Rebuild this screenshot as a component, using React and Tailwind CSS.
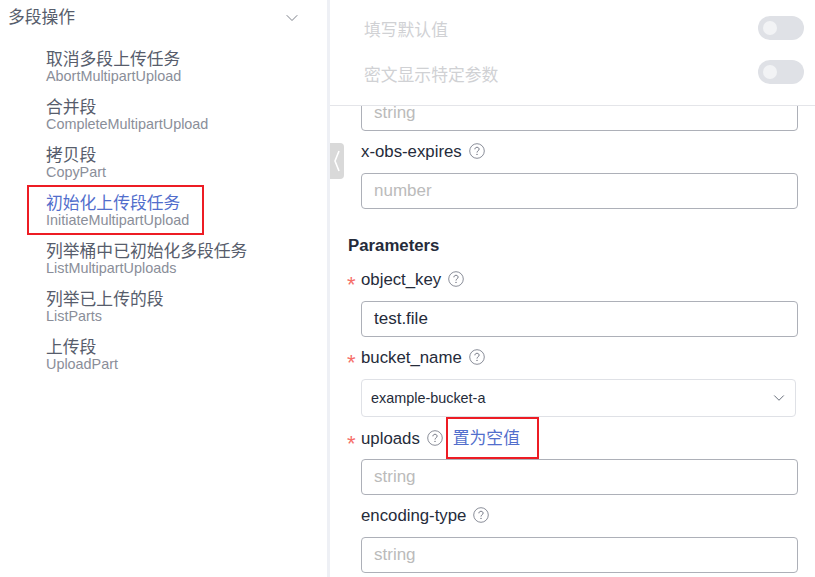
import React from 'react'
import { ChevronDown } from 'lucide-react'

const font = "font-['Liberation_Sans','Noto_Sans_CJK_SC',sans-serif]"

const menuItems = [
  { title: '取消多段上传任务', sub: 'AbortMultipartUpload' },
  { title: '合并段', sub: 'CompleteMultipartUpload' },
  { title: '拷贝段', sub: 'CopyPart' },
  { title: '初始化上传段任务', sub: 'InitiateMultipartUpload', active: true },
  { title: '列举桶中已初始化多段任务', sub: 'ListMultipartUploads' },
  { title: '列举已上传的段', sub: 'ListParts' },
  { title: '上传段', sub: 'UploadPart' }
]

const HelpIcon = () => (
  <svg width="16" height="16" viewBox="0 0 16 16" fill="none" className="-mt-[1px] shrink-0">
    <circle cx="8" cy="8" r="7.3" stroke="#8a8e99" strokeWidth="1" />
    <path d="M5.9 6.3c0-1.2.9-2 2.1-2s2.1.8 2.1 1.9c0 1.5-2.1 1.7-2.1 3.3" stroke="#6f7380" strokeWidth="1" />
    <circle cx="8" cy="11.4" r="0.7" fill="#6f7380" />
  </svg>
)

const Toggle = () => (
  <div className="flex h-6 w-[46px] items-center rounded-full bg-[#dfe1e6] pl-[5px]">
    <div className="h-[14px] w-[14px] rounded-full bg-[#f2f3f5]" />
  </div>
)

const Label = ({ name, required, children, className = '' }) => (
  <div className={`relative flex h-6 items-center gap-[7px] text-[16.8px] text-[#252b3a] ${className}`}>
    {required && <span className="absolute -left-[14px] top-[6px] text-[22px] leading-6 text-[#f66f6a]">*</span>}
    <span className="pt-[2px]">{name}</span>
    <HelpIcon />
    {children}
  </div>
)

const TextInput = ({ placeholder, value, className = '' }) => (
  <div className={`flex h-9 w-[437px] items-center rounded border border-[#adb0b8] px-3 text-[17px] ${value ? 'text-[#252b3a]' : 'text-[#bbbbbb]'} ${className}`}>
    {value || placeholder}
  </div>
)

export default function App() {
  return (
    <div className={`flex h-[577px] w-[815px] overflow-hidden bg-white ${font}`}>
      {/* Left menu */}
      <aside className="relative h-full w-[330px] shrink-0 border-r-[3px] border-[#eef0f5]">
        <div className="flex h-[36px] items-center justify-between pl-2 pr-[25px] text-[16.8px] text-[#575d6c]">
          <span>多段操作</span>
          <ChevronDown size={20} strokeWidth={1.1} color="#71757f" />
        </div>
        <ul className="pt-[11px] pl-[46px]">
          {menuItems.map((item) => (
            <li key={item.sub} className="relative h-12">
              <div className={`h-[25px] text-[16.8px] leading-[25px] ${item.active ? 'text-[#526ecc]' : 'text-[#575d6c]'}`}>
                {item.title}
              </div>
              <div className="-mt-[4px] text-[14.4px] leading-[17px] text-[#8a8e99]">{item.sub}</div>
              {item.active && (
                <div className="absolute -left-[19px] -top-[6px] h-[50px] w-[177px] border-2 border-[#ed1c24]" />
              )}
            </li>
          ))}
        </ul>
      </aside>

      {/* Right form */}
      <main className="relative h-full flex-1 overflow-hidden">
        <header className="relative z-10 h-[106px] border-b border-[#e4e5e9] bg-white pl-[34px] pr-[11px] pt-[16px] text-[16.8px] text-[#d0d1d4]">
          <div className="flex h-6 items-center justify-between">
            <span className="pt-[6px]">填写默认值</span>
            <Toggle />
          </div>
          <div className="mt-[20px] flex h-6 items-center justify-between">
            <span className="pt-[8px]">密文显示特定参数</span>
            <Toggle />
          </div>
        </header>

        <div className="absolute left-0 top-[143px] z-10 flex h-9 w-[14px] items-center justify-center rounded-r bg-[#d9d9d9]">
          <svg width="8" height="22" viewBox="0 0 8 22" fill="none">
            <path d="M6 1 2 11l4 10" stroke="#ffffff" strokeWidth="1.6" />
          </svg>
        </div>

        <div className="pl-[31px]">
          <TextInput placeholder="string" className="-mt-[11px]" />
          <Label name="x-obs-expires" className="mt-2" />
          <TextInput placeholder="number" className="mt-[10px]" />

          <div className="-ml-[13px] mt-[25px] h-6 text-[16.8px] font-bold leading-6 text-[#252b3a]">Parameters</div>
          <Label name="object_key" required className="mt-[9px]" />
          <TextInput value="test.file" className="mt-[10px]" />

          <Label name="bucket_name" required className="mt-2" />
          <div className="mt-[10px] flex h-[38px] w-[435px] items-center justify-between rounded border border-[#dfe1e6] pl-[9px] pr-[7px] text-[14.4px] text-[#252b3a]">
            <span className="pt-[2px]">example-bucket-a</span>
            <ChevronDown size={18} strokeWidth={1.2} color="#575d6c" />
          </div>

          <Label name="uploads" required className="mt-[9px]">
            <span className="relative ml-[3px] pt-[2px] text-[16.8px] text-[#526ecc]">
              置为空值
              <span className="absolute -left-[7px] -top-[7px] h-[42px] w-[93px] border-2 border-[#ed1c24]" />
            </span>
          </Label>
          <TextInput placeholder="string" className="mt-[9px]" />

          <Label name="encoding-type" className="mt-2" />
          <TextInput placeholder="string" className="mt-[10px]" />
        </div>
      </main>
    </div>
  )
}
